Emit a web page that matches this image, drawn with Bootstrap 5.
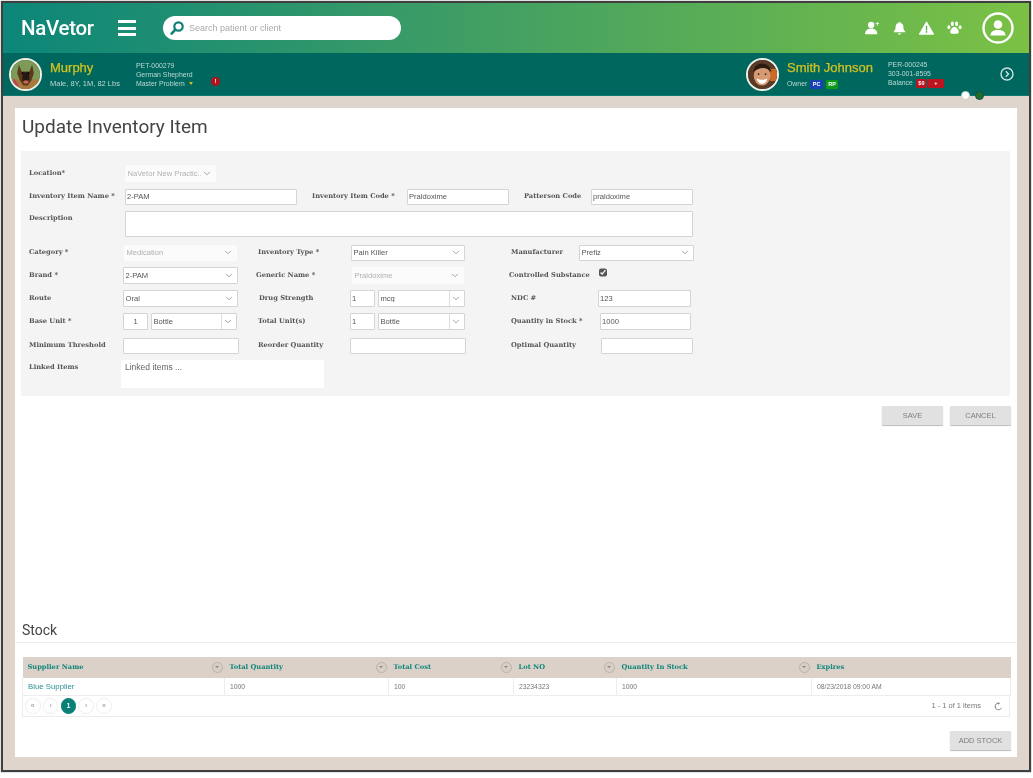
<!DOCTYPE html>
<html lang="en">
<head>
<meta charset="utf-8">
<title>Update Inventory Item</title>
<link href="https://cdn.jsdelivr.net/npm/bootstrap@5.3.0/dist/css/bootstrap.min.css" rel="stylesheet">
<style>
html,body{height:778px;overflow:hidden;background:#fff;margin:0}
body{font-family:"Liberation Sans",Arial,sans-serif;color:#666}
.frame{margin:1px 2px 0 1px;height:771px;border:2px solid #3f3f3f;background:#dfd5cd;box-shadow:0 0 1px #555;position:relative;filter:blur(.45px)}
.topbar{height:50px;background:linear-gradient(90deg,#0c8679 0%,#3c9c66 42%,#7bc144 100%);padding:0 15px 0 18px}
.logo{font:500 20.500px/1 Roboto,sans-serif;color:#fff;width:97px;letter-spacing:-.3px}
.burger{width:18px;height:16px;margin-right:27px;border-top:3px solid #fff;border-bottom:3px solid #fff;position:relative}
.burger::after{content:"";position:absolute;left:0;right:0;top:3.5px;height:3px;background:#fff}
.searchpill{width:238px;height:24px;border-radius:12px;background:#fff;padding-left:6px;gap:2px}
.searchpill input{border:0;outline:0;font:9px "Liberation Sans",sans-serif;color:#999;width:190px;background:transparent}
.searchpill input::placeholder{color:#aaa;opacity:1}
.topicons{gap:13px;margin-right:20px}
.patientbar{height:43px;background:#00675f;padding:0 15px 0 6px;color:#b9d6d2;border-bottom:1px solid #0a7a70}
.avatar{width:33px;height:33px;border-radius:50%;border:2px solid #f2efe9;overflow:hidden;flex:none;display:block}
.pname{font:400 13px/15px "Liberation Sans",sans-serif;color:#d2c21f;white-space:nowrap;-webkit-text-stroke:.25px #d2c21f}
.ptiny{font:6.900px/9px "Liberation Sans",sans-serif;color:#bcd8d4;white-space:nowrap}
.pdesc{font-size:7.500px}
.tagb{display:inline-block;font:700 5.500px/9px "Liberation Sans",sans-serif;color:#fff;padding:0 2.500px;border-radius:1px;margin-left:1px}
.bgblue{background:#1b3fb5}.bggreen{background:#0d9a1a}.bgred{background:#bd1420}
.tagw{width:16px;text-align:center}
.w-a{width:86px;margin-left:8px}.w-b{width:90px}
.w-c{width:101px}
.dotred{flex:none;width:9px;height:9px;border-radius:50%;background:#b3101c;color:#fff;font:700 6px/9px "Liberation Sans",sans-serif;text-align:center;margin:15px 0 0 -15px}
.caretdown{display:inline-block;width:0;height:0;border:2.5px solid transparent;border-top:3px solid #d8bf20;border-bottom:0;margin-left:2px;vertical-align:1px}
.chev{margin-left:22px}
.dot1,.dot2{position:absolute;top:88px;width:9px;height:9px;border-radius:50%}
.dot1{left:958px;background:#fff;border:1px solid #ccc}
.dot2{left:972px;background:#1f6e2c;border:1px solid #0d4d4a}
.sheet{margin:12px 12px 0 12px;height:649px;background:#fff}
.ttl{font:400 19px/24px Roboto,sans-serif;color:#444;margin:7px 0 12px 7px}
.fpanel{margin:0 7px 0 6px;height:245px;background:#f4f4f4;padding:14px 0 0 8px}
.frow{display:grid;align-items:center;height:17px}
.lb{font:700 6.700px/1 "DejaVu Serif",serif;color:#555;white-space:nowrap;margin:0}
.fx{display:flex;gap:3px;min-width:0}
.form-control.fld,.form-select.fld{height:16px;min-height:0;font:7.600px/1 "Liberation Sans",sans-serif;color:#555;padding:0 1px;border:1.5px solid #d4d4d4;border-radius:1px;background-color:#fff;box-shadow:none}
.form-select.fld{--bs-form-select-bg-img:url("data:image/svg+xml,%3csvg xmlns='http://www.w3.org/2000/svg' viewBox='0 0 16 16'%3e%3cpath fill='none' stroke='%23999' stroke-linecap='round' stroke-linejoin='round' stroke-width='2' d='m2 5 6 6 6-6'/%3e%3c/svg%3e");padding:0 14px 0 1.5px;background-size:8px 7px;background-position:right 4px center}
.form-select.splitsel{background-image:var(--bs-form-select-bg-img),linear-gradient(#ddd,#ddd);background-size:8px 7px,1px 100%;background-position:right 4px center,right 14px center;background-repeat:no-repeat}
.form-control.fld:disabled,.form-select.fld:disabled{background-color:#fbfbfb;border-color:#fbfbfb;color:#b0b0b0}
.fh17{height:17px!important}
.num{flex:none}
.n25{width:25px}
.ctr{text-align:center}
.r-loc{grid-template-columns:96px 91px}
.r-name{grid-template-columns:96px 172px 110px 102px 82px 102px;margin-top:6px}
.m15{margin-left:15px}
.r-desc{grid-template-columns:96px 568px;height:26px;margin-top:6px;align-items:start}
.r-desc textarea{height:26px!important;resize:none}
.r-cat{grid-template-columns:95px 113px 114px 114px 114px 115px;margin-top:7px}
.ml21{margin-left:21px}
.ml46{margin-left:46px}
.r-brand{grid-template-columns:94px 115px 114px 112px 135px 20px;margin-top:6px}
.ml18{margin-left:18px}
.ml45{margin-left:45px}
.r-route{grid-template-columns:94px 115px 112px 115px 133px 93px;margin-top:6px}
.r-base{grid-template-columns:94px 114px 113px 115px 135px 91px;margin-top:6px}
.r-min{grid-template-columns:94px 116px 111px 116px 135px 92px;margin-top:7px}
.ml19b{margin-left:19px}
.r-link{grid-template-columns:92px 203px;height:28px;margin-top:6px;align-items:start}
.linkbox{height:28px;background:#fff;font:8.500px/1 "Liberation Sans",sans-serif;color:#666;padding:3px 4px}
.chk{width:8px;height:9px;margin:1px 0 0!important;align-self:start;accent-color:#555;border-radius:1px}
.btnrow{margin:10px 6px 0 0;gap:7px}
.gbtn{width:61px;height:19px;padding:0;font:7.500px/19px "Liberation Sans",sans-serif;color:#7d7d7d;background:#e1e1e1;border:0;border-radius:1px;box-shadow:0 1px 1px #bbb}
.gbtn:hover{background:#e1e1e1;color:#7d7d7d}
.stocktitle{font:400 14px/18px Roboto,sans-serif;color:#444;margin:0 0 0 7px}
.rule{height:1px;background:#ececec;margin:3px 0 14px}
.tblwrap{margin:0 7px 0 7px}
.stocktbl{table-layout:fixed;margin:0;border-collapse:collapse;width:988px}
.stocktbl th{height:21px;background:#dbd1c9;font:700 6.700px/1 "DejaVu Serif",serif;color:#0f8579;padding:0 5px;border:0;vertical-align:middle}
.stocktbl td{height:18px;font:6.800px/17px "Liberation Sans",sans-serif;color:#777;padding:0 5px;border:0;border-right:1px solid #ededed;border-bottom:1px solid #ededed;vertical-align:middle;box-shadow:none}
.stocktbl td:last-child{border-right:1px solid #ededed}
.stocktbl td:first-child{border-left:1px solid #ededed}
.stocktbl td.lnk{font-size:7.800px;color:#2b8f97}
.c1{width:202px}.c2{width:164px}.c3{width:125px}.c4{width:103px}.c5{width:195px}.c6{width:199px}
.hcell{display:flex;justify-content:space-between;align-items:center}
.flt{width:11px;height:11px;border-radius:50%;border:1px solid #bdb3ab;background:#d8cfc7;flex:none;margin-right:-3px;display:flex;align-items:center;justify-content:center}
.flt::after{content:"";width:0;height:0;border:2px solid transparent;border-top:2.5px solid #8f857e;border-bottom:0}
.pagerbar{height:21px;border:1px solid #ededed;border-top:0;padding:0 6px 0 2px;font:7.500px/1 "Liberation Sans",sans-serif;color:#777}
.pagination.pgr{margin:0;gap:3.300px;--bs-pagination-border-width:0}
.pgr .page-link{width:15.500px;height:15.500px;border-radius:50%!important;border:1px solid #eee;background:#fff;color:#aaa;font:700 7px/13px "Liberation Sans",sans-serif;padding:0;text-align:center}
.pgr .page-item.active .page-link{background:#0b7f75;border-color:#0b7f75;color:#dff}
.pgcount{gap:13px}
.stockbtn{margin:14px 6px 7px 0}
</style>
</head>
<body>
<div class="frame d-flex flex-column">
  <div class="topbar d-flex align-items-center">
    <div class="logo">NaVetor</div>
    <div class="burger"></div>
    <div class="searchpill d-flex align-items-center">
      <svg width="16" height="16" viewBox="0 0 16 16"><circle cx="9.500" cy="6.500" r="4.200" fill="none" stroke="#0f7f77" stroke-width="2.200"/><path d="M6.400 9.600 2.600 13.600" stroke="#0f7f77" stroke-width="2.600" stroke-linecap="round"/></svg>
      <input type="text" placeholder="Search patient or client" aria-label="Search patient or client">
    </div>
    <div class="ms-auto topicons d-flex align-items-center">
      <svg width="15" height="14" viewBox="0 0 17 16" fill="#fff"><circle cx="7" cy="4.500" r="3.600"/><path d="M0 15c0-4 3-6.400 7-6.400S14 11 14 15z"/><path d="M12 2.500h4v1h-4zM13.500 1h1v4h-1z"/></svg>
      <svg width="13" height="14" viewBox="0 0 15 16" fill="#fff"><path d="M7.500 1c.8 0 1.300.5 1.300 1.200 2.300.6 3.200 2.600 3.200 5 0 2.300.7 3.400 2 4.800v1H1v-1c1.300-1.400 2-2.500 2-4.800 0-2.400.9-4.400 3.200-5C6.200 1.500 6.700 1 7.500 1z"/><path d="M5.800 14h3.400a1.700 1.700 0 0 1-3.400 0z"/></svg>
      <svg width="15" height="14" viewBox="0 0 17 15"><path d="M8.500 0.500 16.700 14.600H.3z" fill="#fff" stroke="#fff" stroke-linejoin="round"/><path d="M7.700 5h1.600v5.200H7.700zM7.700 11h1.600v1.800H7.700z" fill="#5fb050"/></svg>
      <svg width="15" height="14" viewBox="0 0 16 15" fill="#fff"><ellipse cx="5.700" cy="3" rx="1.700" ry="2.500"/><ellipse cx="10.300" cy="3" rx="1.700" ry="2.500"/><ellipse cx="2" cy="6.700" rx="1.600" ry="2.200"/><ellipse cx="14" cy="6.700" rx="1.600" ry="2.200"/><path d="M8 6.500c2.400 0 4.500 3 4.500 5.300 0 2.200-2.400 1.800-4.500 1.800s-4.500.4-4.500-1.800C3.500 9.500 5.600 6.500 8 6.500z"/></svg>
    </div>
    <svg width="32" height="32" viewBox="0 0 32 32"><circle cx="16" cy="16" r="14.500" fill="none" stroke="#fff" stroke-width="2.400"/><circle cx="16" cy="12.500" r="4.300" fill="#fff"/><path d="M8.500 23.500c0-3.800 3-5.500 7.500-5.500s7.500 1.700 7.500 5.500z" fill="#fff"/></svg>
  </div>

  <div class="patientbar d-flex align-items-center">
    <svg class="avatar" viewBox="0 0 33 33"><rect width="33" height="33" fill="#7d9a58"/><rect y="22" width="33" height="11" fill="#a9793e"/><path d="M9 5l3 8 9 0 3-8 2 10-3 9-4 5h-5l-4-6-3-8z" fill="#5b3a1e"/><path d="M13 14h7l1 8-4 5-4-4z" fill="#231a14"/><ellipse cx="17" cy="25" rx="3" ry="2" fill="#c65"/><circle cx="13" cy="15" r="1" fill="#000"/><circle cx="20" cy="15" r="1" fill="#000"/><path d="M3 20l6 9-6 2z" fill="#b5475a"/></svg>
    <div class="d-flex flex-column w-a">
      <span class="pname">Murphy</span>
      <span class="ptiny pdesc mt-1">Male, 8Y, 1M, 82 Lbs</span>
    </div>
    <div class="ptiny w-b">PET-000279<br>German Shepherd<br>Master Problem <span class="caretdown"></span></div>
    <div class="dotred">!</div>
    <div class="ms-auto d-flex align-items-center">
      <svg class="avatar" viewBox="0 0 33 33"><rect width="33" height="33" fill="#5b3a26"/><rect x="25" y="10" width="8" height="14" fill="#c96a2a"/><ellipse cx="16" cy="18" rx="9.500" ry="11" fill="#d79a73"/><path d="M6 14c1-7 5-10 10-10s9 3 11 10c-3-3-6-5-10-5s-8 2-11 5z" fill="#2b1b12"/><path d="M10 21c3 2 9 2 12 0-1 5-4 6-6 6s-5-1-6-6z" fill="#fff"/><circle cx="12" cy="16" r="1" fill="#222"/><circle cx="20" cy="16" r="1" fill="#222"/></svg>
      <div class="ms-2 d-flex flex-column w-c">
        <span class="pname">Smith Johnson</span>
        <span class="ptiny mt-1">Owner <span class="tagb bgblue">PC</span> <span class="tagb bggreen">RP</span></span>
      </div>
      <div class="ptiny w-b">PER-000245<br>303-001-8595<br>Balance <span class="tagb bgred">$0</span><span class="tagb bgred tagw">+</span></div>
      <svg class="chev" width="14" height="14" viewBox="0 0 14 14"><circle cx="7" cy="7" r="6" fill="none" stroke="#cfe3e0" stroke-width="1.400"/><path d="M5.800 4.200 8.500 7l-2.700 2.800" fill="none" stroke="#cfe3e0" stroke-width="1.400"/></svg>
    </div>
  </div>
  <span class="dot1"></span><span class="dot2"></span>

  <div class="sheet d-flex flex-column">
    <h1 class="ttl">Update Inventory Item</h1>
    <form class="fpanel">
      <div class="frow r-loc">
        <label class="lb">Location*</label>
        <select class="form-select fld fh17" disabled aria-label="Location"><option>NaVetor New Practic...</option></select>
      </div>
      <div class="frow r-name">
        <label class="lb">Inventory Item Name *</label>
        <input class="form-control fld" value="2-PAM" aria-label="Inventory Item Name">
        <label class="lb m15">Inventory Item Code *</label>
        <input class="form-control fld" value="Praldoxime" aria-label="Inventory Item Code">
        <label class="lb m15">Patterson Code</label>
        <input class="form-control fld" value="praldoxime" aria-label="Patterson Code">
      </div>
      <div class="frow r-desc">
        <label class="lb mt-1">Description</label>
        <textarea class="form-control fld" aria-label="Description"></textarea>
      </div>
      <div class="frow r-cat">
        <label class="lb">Category *</label>
        <select class="form-select fld" disabled aria-label="Category"><option>Medication</option></select>
        <label class="lb ml21">Inventory Type *</label>
        <select class="form-select fld" aria-label="Inventory Type"><option>Pain Killer</option></select>
        <label class="lb ml46">Manufacturer</label>
        <select class="form-select fld" aria-label="Manufacturer"><option>Prefiz</option></select>
      </div>
      <div class="frow r-brand">
        <label class="lb">Brand *</label>
        <select class="form-select fld fh17" aria-label="Brand"><option>2-PAM</option></select>
        <label class="lb ml18">Generic Name *</label>
        <select class="form-select fld fh17" disabled aria-label="Generic Name"><option>Praldoxime</option></select>
        <label class="lb ml45">Controlled Substance</label>
        <input type="checkbox" class="chk" checked aria-label="Controlled Substance">
      </div>
      <div class="frow r-route">
        <label class="lb">Route</label>
        <select class="form-select fld fh17" aria-label="Route"><option>Oral</option></select>
        <label class="lb ml21">Drug Strength</label>
        <div class="fx"><input class="form-control fld fh17 num n25" value="1" aria-label="Drug Strength"><select class="form-select fld fh17 splitsel" aria-label="Strength unit"><option>mcg</option></select></div>
        <label class="lb ml46">NDC #</label>
        <input class="form-control fld fh17" value="123" aria-label="NDC">
      </div>
      <div class="frow r-base">
        <label class="lb">Base Unit *</label>
        <div class="fx"><input class="form-control fld fh17 num n25 ctr" value="1" aria-label="Base Unit"><select class="form-select fld fh17 splitsel" aria-label="Base unit type"><option>Bottle</option></select></div>
        <label class="lb ml21">Total Unit(s)</label>
        <div class="fx"><input class="form-control fld fh17 num n25" value="1" aria-label="Total Units"><select class="form-select fld fh17 splitsel" aria-label="Total unit type"><option>Bottle</option></select></div>
        <label class="lb ml46">Quantity in Stock *</label>
        <input class="form-control fld fh17" value="1000" aria-label="Quantity in Stock">
      </div>
      <div class="frow r-min">
        <label class="lb">Minimum Threshold</label>
        <input class="form-control fld" aria-label="Minimum Threshold">
        <label class="lb ml19b">Reorder Quantity</label>
        <input class="form-control fld" aria-label="Reorder Quantity">
        <label class="lb ml45">Optimal Quantity</label>
        <input class="form-control fld" aria-label="Optimal Quantity">
      </div>
      <div class="frow r-link">
        <label class="lb mt-1">Linked Items</label>
        <div class="linkbox">Linked items ...</div>
      </div>
    </form>
    <div class="btnrow d-flex justify-content-end">
      <button type="button" class="btn gbtn">SAVE</button>
      <button type="button" class="btn gbtn">CANCEL</button>
    </div>

    <div class="mt-auto">
      <h2 class="stocktitle">Stock</h2>
      <div class="rule"></div>
      <div class="tblwrap">
        <table class="table stocktbl">
          <colgroup><col class="c1"><col class="c2"><col class="c3"><col class="c4"><col class="c5"><col class="c6"></colgroup>
          <thead><tr>
            <th><div class="hcell">Supplier Name<span class="flt"></span></div></th>
            <th><div class="hcell">Total Quantity<span class="flt"></span></div></th>
            <th><div class="hcell">Total Cost<span class="flt"></span></div></th>
            <th><div class="hcell">Lot NO<span class="flt"></span></div></th>
            <th><div class="hcell">Quantity In Stock<span class="flt"></span></div></th>
            <th>Expires</th>
          </tr></thead>
          <tbody><tr>
            <td class="lnk">Blue Supplier</td><td>1000</td><td>100</td><td>23234323</td><td>1000</td><td>08/23/2018 09:00 AM</td>
          </tr></tbody>
        </table>
        <div class="pagerbar d-flex align-items-center justify-content-between">
          <ul class="pagination pgr">
            <li class="page-item"><a class="page-link" href="#">«</a></li>
            <li class="page-item"><a class="page-link" href="#">‹</a></li>
            <li class="page-item active"><a class="page-link" href="#">1</a></li>
            <li class="page-item"><a class="page-link" href="#">›</a></li>
            <li class="page-item"><a class="page-link" href="#">»</a></li>
          </ul>
          <div class="d-flex align-items-center pgcount">
            <span>1 - 1 of 1 items</span>
            <svg width="9" height="9" viewBox="0 0 10 10"><path d="M8.300 6.500A3.700 3.700 0 1 1 5 1.300" fill="none" stroke="#888" stroke-width="1.100"/><path d="M4.500 0v3l2.300-1.500z" fill="#888"/></svg>
          </div>
        </div>
      </div>
      <div class="stockbtn d-flex justify-content-end">
        <button type="button" class="btn gbtn">ADD STOCK</button>
      </div>
    </div>
  </div>
</div>
<script src="https://cdn.jsdelivr.net/npm/bootstrap@5.3.0/dist/js/bootstrap.bundle.min.js"></script>
</body>
</html>
